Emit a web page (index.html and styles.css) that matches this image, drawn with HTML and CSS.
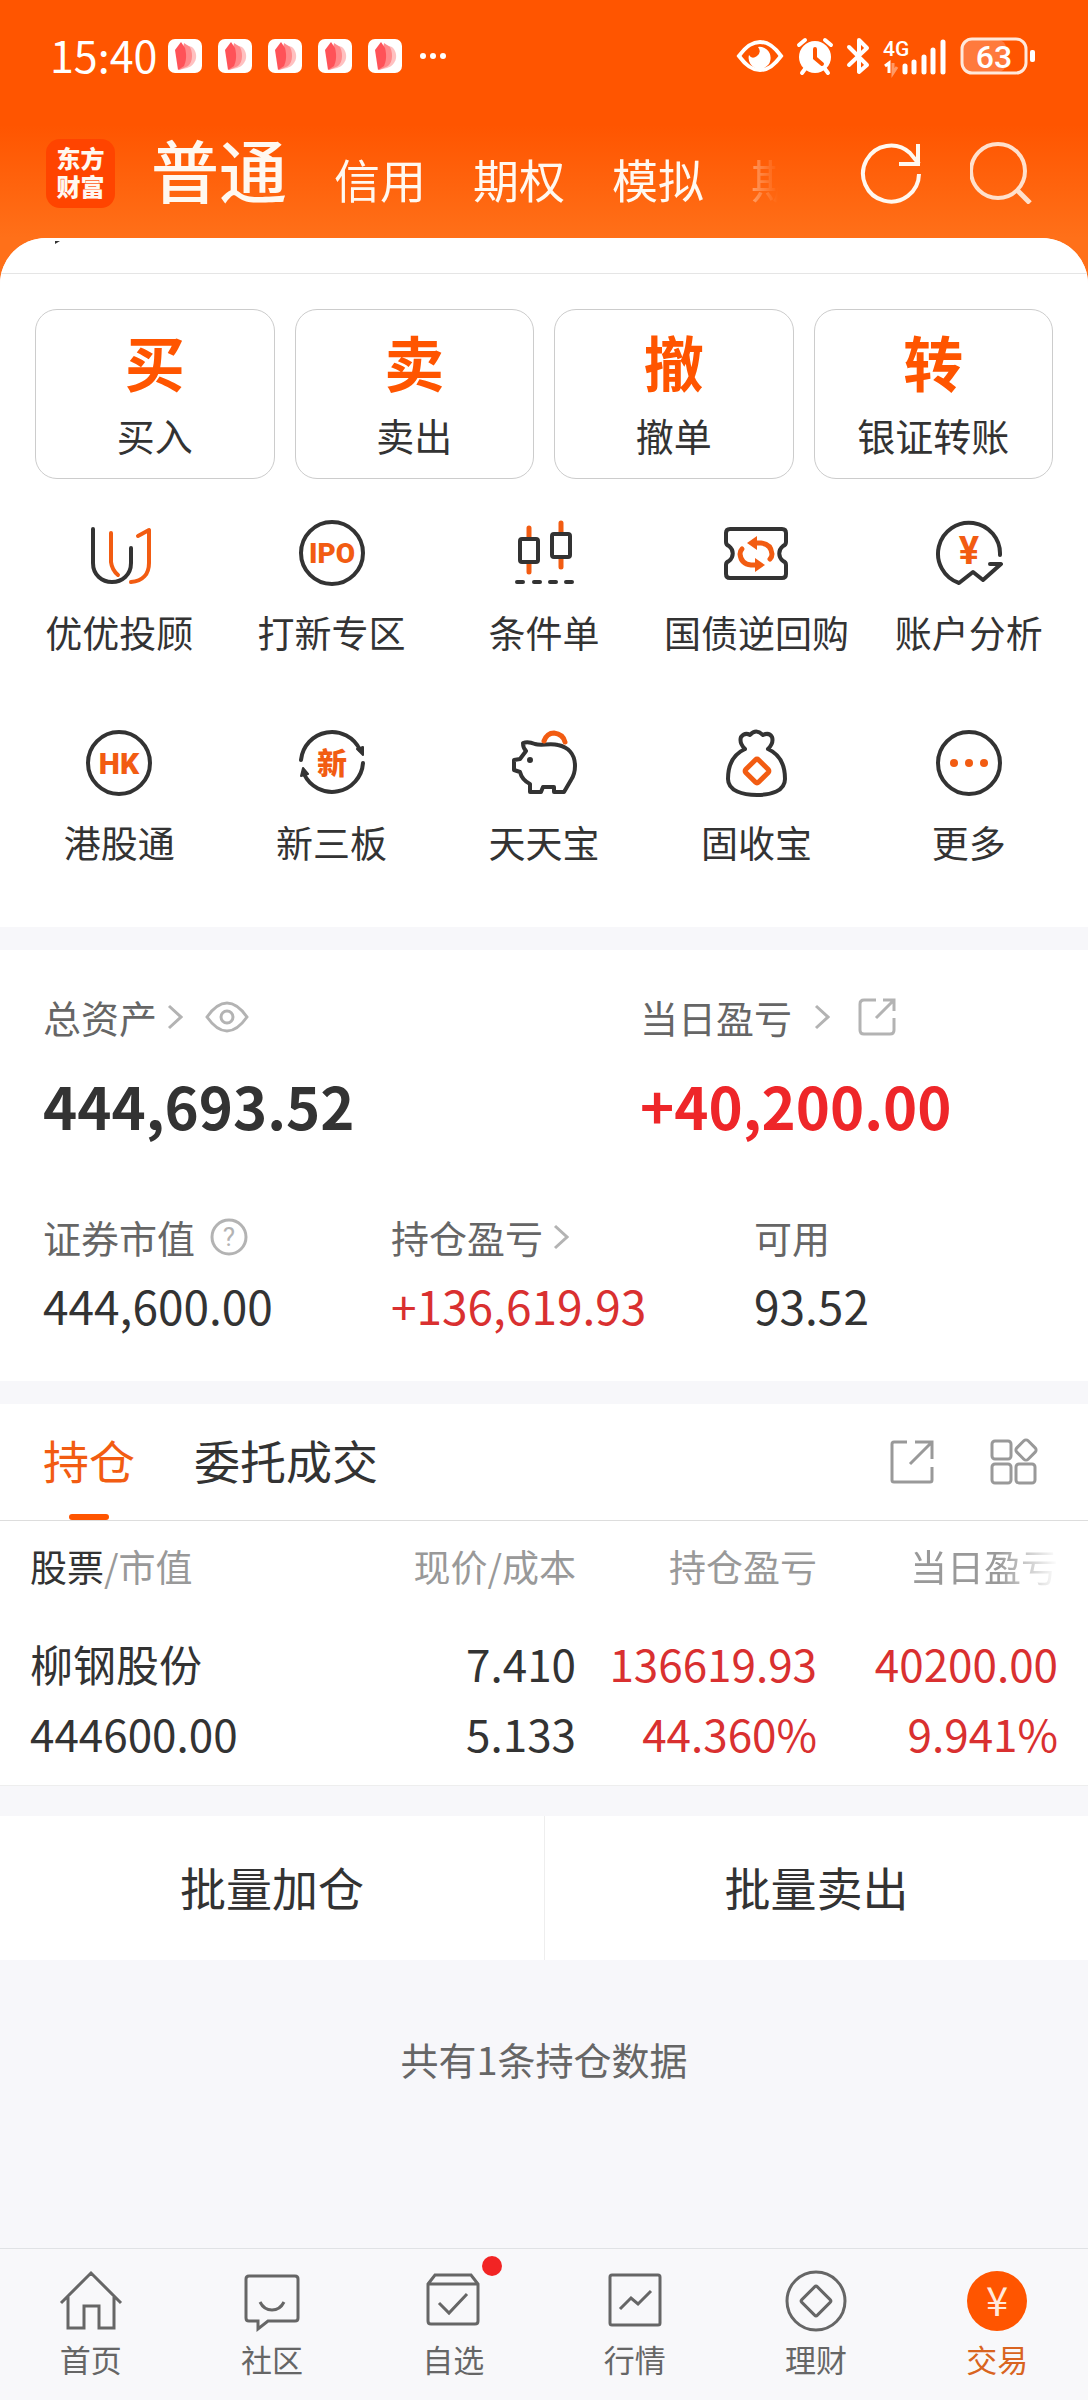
FILE: index.html
```html
<!DOCTYPE html>
<html lang="zh-CN">
<head>
    <meta charset="UTF-8">
    <meta name="viewport" content="width=device-width, initial-scale=1.0">
    <title>交易</title>
    <link rel="stylesheet" href="styles.css">
</head>
<body>
    <div class="status-bar">
        <span class="time">15:40</span>
        <div class="notifications">
            <svg class="notice" viewBox="0 0 34 34"><use href="#notice"/></svg>
            <svg class="notice" viewBox="0 0 34 34"><use href="#notice"/></svg>
            <svg class="notice" viewBox="0 0 34 34"><use href="#notice"/></svg>
            <svg class="notice" viewBox="0 0 34 34"><use href="#notice"/></svg>
            <svg class="notice" viewBox="0 0 34 34">
                <g id="notice">
                    <rect width="34" height="34" rx="7" fill="#fff"/>
                    <path d="M18 6l6 2c7 6 5 18-5 21l-8 2z" fill="#ffc0c0"/>
                    <path d="M16 4l6 4c4 8 2 18-4 20l-7 3z" fill="#ff8a8c"/>
                    <path d="M13 3l4 6c2 8 1 13-1 18l-6 4-3-20z" fill="#ff5258"/>
                </g>
            </svg>
        </div>
        <svg class="dots" width="28" height="8" viewBox="0 0 28 8" fill="#fff"><circle cx="4" cy="4" r="3"/><circle cx="14" cy="4" r="3"/><circle cx="24" cy="4" r="3"/></svg>
        <div class="system">
            <svg width="48" height="36" viewBox="0 0 48 36">
                <path d="M3 18C11 7 17 4 24 4s13 3 21 14C37 29 31 32 24 32S11 29 3 18z" fill="none" stroke="#fff" stroke-width="4"/>
                <path d="M22 9a11 11 0 1 1-9 8q3 5 8 1t1-9z" fill="#fff"/>
            </svg>
            <svg width="36" height="36" viewBox="0 0 36 36">
                <circle cx="18" cy="19" r="16" fill="#fff"/>
                <path d="M2 7l6-5M34 7l-6-5M8 31l-3 4M28 31l3 4" stroke="#fff" stroke-width="4" stroke-linecap="round"/>
                <path d="M18 11v9l7 6" fill="none" stroke="#ff5500" stroke-width="4" stroke-linecap="round"/>
            </svg>
            <svg width="24" height="36" viewBox="0 0 24 36" fill="none" stroke="#fff" stroke-width="4" stroke-linejoin="round" stroke-linecap="round"><path d="M3 9l18 18-8 7V2l8 8L3 27"/></svg>
            <svg width="64" height="36" viewBox="0 0 64 36">
                <text class="network" x="0" y="18">4G</text>
                <path d="M2 28l4-3v10" fill="none" stroke="#fff" stroke-width="3"/>
                <path d="M10 25v10l4-6" fill="none" stroke="#ff9966" stroke-width="3"/>
                <path d="M22 28v6M31 24v10M41 19v15M50 12v22M60 4v30" stroke="#fff" stroke-width="5" stroke-linecap="round"/>
            </svg>
            <svg width="76" height="38" viewBox="0 0 76 38">
                <rect x="3" y="3" width="43" height="32" rx="8" fill="#ff7a3d"/>
                <rect x="2" y="2" width="64" height="34" rx="10" fill="none" stroke="#ffe9dc" stroke-width="3"/>
                <rect x="70" y="13" width="5" height="12" rx="2" fill="#fff"/>
                <text class="battery" x="34" y="31">63</text>
            </svg>
        </div>
    </div>

    <header class="header">
        <div class="logo">东方<br>财富</div>
        <nav class="accounts">
            <button class="account active">普通</button>
            <button class="account">信用</button>
            <button class="account">期权</button>
            <button class="account">模拟</button>
            <button class="account">期货</button>
        </nav>
        <button class="head-btn" aria-label="刷新">
            <svg width="62" height="62" viewBox="0 0 62 62" fill="none" stroke="#fff8f0" stroke-width="4"><path d="M59 32a28 28 0 1 1-9-21l9 11"/><path d="M58 2v20H39"/></svg>
        </button>
        <button class="head-btn" aria-label="搜索">
            <svg width="62" height="62" viewBox="0 0 62 62" fill="none" stroke="#ffe0cc" stroke-width="4"><circle cx="28" cy="29" r="27"/><path d="M47 48l13 13" stroke-width="5"/></svg>
        </button>
    </header>

    <main class="sheet">
        <section class="panel">
            <div class="sheet-top"><svg width="8" height="4" viewBox="0 0 8 4"><path d="M1 0h5L1 3z" fill="#333"/></svg></div>
            <div class="actions">
                <button class="action"><b>买</b><span>买入</span></button>
                <button class="action"><b>卖</b><span>卖出</span></button>
                <button class="action"><b>撤</b><span>撤单</span></button>
                <button class="action"><b>转</b><span>银证转账</span></button>
            </div>
            <div class="menu">
                <a class="menu-item" href="#">
                    <svg class="menu-icon" viewBox="0 0 70 70"><path d="M9 11v34C9 57 18 64 28 64s19-7 19-19V30"/><path class="hot" d="M27 15v29q1 8 7 13M54 18l11-6v33c0 11-6 18-18 19"/></svg>
                    优优投顾
                </a>
                <a class="menu-item" href="#">
                    <svg class="menu-icon" viewBox="0 0 70 70"><circle cx="35" cy="35" r="31"/><text class="small" x="35" y="45">IPO</text></svg>
                    打新专区
                </a>
                <a class="menu-item" href="#">
                    <svg class="menu-icon" viewBox="0 0 70 70"><path class="hot" d="M20 10v9M20 46v8M52 5v9M52 41v8" stroke-width="5"/><rect x="11" y="21" width="18" height="23" rx="2"/><rect x="43" y="16" width="18" height="23" rx="2"/><path d="M8 64h6M25 64h6M41 64h6M57 64h6"/></svg>
                    条件单
                </a>
                <a class="menu-item" href="#">
                    <svg class="menu-icon" viewBox="0 0 70 70">
                        <path d="M5 15q0-4 4-4h52q4 0 4 4v9q0 3-3 4c-5 4-5 11 0 15q3 1 3 4v9q0 4-4 4H9q-4 0-4-4v-9q0-3 3-4c5-4 5-11 0-15q-3-1-3-4z"/>
                        <g id="swap"><path class="hot" d="M34 25h6q10 1 11 11 0 3-2 5" stroke-width="5"/><path class="hot-fill" d="M26 25l10-7v14z"/></g>
                        <use href="#swap" transform="rotate(180 35 36)"/>
                    </svg>
                    国债逆回购
                </a>
                <a class="menu-item" href="#">
                    <svg class="menu-icon" viewBox="0 0 70 70"><path d="M66 37A31 31 0 1 0 25 65l14-11 10 8 18-16H56"/><text class="yuan" x="35" y="46">¥</text></svg>
                    账户分析
                </a>
                <a class="menu-item" href="#">
                    <svg class="menu-icon" viewBox="0 0 70 70"><circle cx="35" cy="35" r="31"/><text x="35" y="46">HK</text></svg>
                    港股通
                </a>
                <a class="menu-item" href="#">
                    <svg class="menu-icon" viewBox="0 0 70 70"><path d="M4 32A31 31 0 0 1 63 22M66 35A31 31 0 0 1 7 46"/><path class="dark-fill" d="M60 21l6-2v8zM4 48l2-8 5 6z"/><text x="35" y="46">新</text></svg>
                    新三板
                </a>
                <a class="menu-item" href="#">
                    <svg class="menu-icon" viewBox="0 0 70 70"><path d="M5 32v10l6 2q2 8 10 12v8h11l2-5h11v5h10l7-12q4-6 4-14c0-12-7-19-17-21-8-2-17 1-23-1q-7-3-12-1 0 5 3 8l-6 8z"/><circle class="dark-fill" cx="21" cy="32" r="2"/><path class="hot" d="M35 13q3-8 10-8 9 1 11 9" stroke-width="5"/></svg>
                    天天宝
                </a>
                <a class="menu-item" href="#">
                    <svg class="menu-icon" viewBox="0 0 70 70"><path d="M24 21q-6-6-4-12 4-5 9-2 6-7 13 0 6-3 9 2 2 6-4 12c11 5 17 15 17 30 0 12-14 16-28 16S7 63 7 51c0-15 6-25 17-30"/><rect class="hot" x="27" y="34" width="18" height="18" rx="2" transform="rotate(45 36 43)" stroke-width="5"/></svg>
                    固收宝
                </a>
                <a class="menu-item" href="#">
                    <svg class="menu-icon" viewBox="0 0 70 70"><circle cx="35" cy="35" r="31"/><circle class="hot-fill" cx="20" cy="35" r="4"/><circle class="hot-fill" cx="35" cy="35" r="4"/><circle class="hot-fill" cx="50" cy="35" r="4"/></svg>
                    更多
                </a>
            </div>
        </section>

        <section class="panel assets">
            <div class="totals">
                <div>
                    <div class="label">总资产
                        <svg class="chevron" viewBox="0 0 16 26"><path d="M2 2l12 11L2 24"/></svg>
                        <svg class="eye" viewBox="0 0 44 32"><path d="M2 16C9 6 15 2 22 2s13 4 20 14C35 26 29 30 22 30S9 26 2 16z"/><circle cx="22" cy="16" r="6"/></svg>
                    </div>
                    <div class="total">444,693.52</div>
                </div>
                <div>
                    <div class="label">当日盈亏
                        <svg class="chevron wide" viewBox="0 0 16 26"><path d="M2 2l12 11L2 24"/></svg>
                        <svg class="share" viewBox="0 0 38 38"><path d="M18 2H6q-4 0-4 4v26q0 4 4 4h26q4 0 4-4V20M25 2h11v11M36 2L18 20"/></svg>
                    </div>
                    <div class="total up">+40,200.00</div>
                </div>
            </div>
            <div class="details">
                <div>
                    <div class="label">证券市值
                        <svg class="help" viewBox="0 0 38 38"><circle cx="19" cy="19" r="17"/><text x="19" y="28">?</text></svg>
                    </div>
                    <div class="detail">444,600.00</div>
                </div>
                <div>
                    <div class="label">持仓盈亏
                        <svg class="chevron" viewBox="0 0 16 26"><path d="M2 2l12 11L2 24"/></svg>
                    </div>
                    <div class="detail up">+136,619.93</div>
                </div>
                <div>
                    <div class="label">可用</div>
                    <div class="detail">93.52</div>
                </div>
            </div>
        </section>

        <section class="panel holdings">
            <div class="tabs">
                <button class="tab active">持仓</button>
                <button class="tab">委托成交</button>
                <button class="tool" aria-label="分享">
                    <svg width="48" height="48" viewBox="0 0 48 48"><path d="M19 4H6q-2 0-2 2v36q0 2 2 2h36q2 0 2-2V29M27 4h17v17M44 4L22 26"/></svg>
                </button>
                <button class="tool" aria-label="布局">
                    <svg width="48" height="48" viewBox="0 0 48 48"><rect x="2" y="3" width="19" height="18" rx="3"/><rect x="2" y="26" width="19" height="19" rx="3"/><rect x="26" y="26" width="19" height="19" rx="3"/><rect x="28" y="4" width="16" height="16" rx="3" transform="rotate(45 36 12)"/></svg>
                </button>
            </div>
            <table class="stocks">
                <thead>
                    <tr>
                        <th><span class="dark">股票</span>/市值</th>
                        <th>现价/成本</th>
                        <th>持仓盈亏</th>
                        <th class="fade">当日盈亏</th>
                    </tr>
                </thead>
                <tbody>
                    <tr>
                        <td><div class="name">柳钢股份</div><div>444600.00</div></td>
                        <td><div>7.410</div><div>5.133</div></td>
                        <td class="up"><div>136619.93</div><div>44.360%</div></td>
                        <td class="up"><div>40200.00</div><div>9.941%</div></td>
                    </tr>
                </tbody>
            </table>
        </section>

        <div class="batch">
            <button>批量加仓</button>
            <button>批量卖出</button>
        </div>
        <p class="summary">共有1条持仓数据</p>
    </main>

    <nav class="bottom-nav">
        <a href="#">
            <span class="nav-icon"><svg viewBox="0 0 64 64"><path d="M2 34L32 4l30 30M9 28v31h16V37h15v22h15V28"/></svg></span>
            首页
        </a>
        <a href="#">
            <span class="nav-icon"><svg viewBox="0 0 64 64"><path d="M9 7h46q3 0 3 3v39q0 3-3 3H28l-10 8v-8H9q-3 0-3-3V10q0-3 3-3zM20 33q4 8 12 8t12-8"/></svg></span>
            社区
        </a>
        <a href="#">
            <span class="nav-icon"><svg viewBox="0 0 64 64"><path d="M7 15l7-9h36l7 9v37q0 3-3 3H10q-3 0-3-3zM7 15h50M18 34l10 10 18-19"/></svg><i class="badge"></i></span>
            自选
        </a>
        <a href="#">
            <span class="nav-icon"><svg viewBox="0 0 64 64"><rect x="7" y="6" width="50" height="50" rx="2"/><path d="M17 40l11-11 7 6 13-13"/></svg></span>
            行情
        </a>
        <a href="#">
            <span class="nav-icon"><svg viewBox="0 0 64 64"><circle cx="32" cy="32" r="29"/><rect x="21" y="21" width="22" height="22" rx="2" transform="rotate(45 32 32)"/></svg></span>
            理财
        </a>
        <a class="active" href="#">
            <span class="nav-icon"><svg viewBox="0 0 64 64"><circle class="coin" cx="32" cy="32" r="30"/><text x="32" y="47">¥</text></svg></span>
            交易
        </a>
    </nav>
</body>
</html>
```
FILE: styles.css
```css
* {
    box-sizing: border-box;
}
body {
    margin: 0;
    min-height: 100vh;
    display: flex;
    flex-direction: column;
    font-family: "Noto Sans CJK SC", "Noto Sans", sans-serif;
    color: #333;
    background: linear-gradient(#ff5500 125px, #ff7019 238px);
}
button {
    padding: 0;
    border: none;
    background: none;
    font-family: inherit;
    color: inherit;
    cursor: pointer;
}
a {
    color: inherit;
    text-decoration: none;
}
svg {
    flex-shrink: 0;
}

/* status bar */
.status-bar {
    display: flex;
    align-items: center;
    height: 112px;
    padding: 0 52px 0 50px;
    color: #fff;
}
.time {
    width: 118px;
    padding-bottom: 4px;
    font-size: 43px;
    line-height: 50px;
}
.notifications {
    display: flex;
    gap: 16px;
}
.notice {
    width: 34px;
    height: 34px;
}
.dots {
    margin-left: 17px;
}
.system {
    display: flex;
    align-items: center;
    gap: 13px;
    margin-left: auto;
}
.system svg {
    overflow: visible;
}
.network {
    fill: #fff;
    font: 500 21px Roboto, sans-serif;
}
.battery {
    fill: #fff;
    font: 500 32px Roboto, sans-serif;
    text-anchor: middle;
}

/* header */
.header {
    display: flex;
    align-items: center;
    height: 126px;
    padding: 0 56px 4px 46px;
    color: #fff8f0;
}
.logo {
    width: 69px;
    height: 69px;
    padding-top: 5px;
    border-radius: 14px;
    background: #ff4400;
    font-size: 24px;
    font-weight: 900;
    line-height: 28px;
    text-align: center;
}
.accounts {
    flex: 1;
    display: flex;
    align-items: baseline;
    gap: 47px;
    margin: 0 82px 0 36px;
    overflow: hidden;
    -webkit-mask-image: linear-gradient(to right, #000 calc(100% - 70px), transparent);
    mask-image: linear-gradient(to right, #000 calc(100% - 70px), transparent);
}
.account {
    flex-shrink: 0;
    font-size: 46px;
    line-height: 100px;
}
.account.active {
    font-size: 68px;
    font-weight: 500;
}
.head-btn {
    height: 62px;
}
.head-btn + .head-btn {
    margin-left: 48px;
}
.head-btn svg {
    display: block;
}

/* content */
.sheet {
    flex: 1;
    overflow: hidden;
    border-radius: 46px 46px 0 0;
    background: #f7f7fa;
}
.panel {
    margin-bottom: 23px;
    background: #fff;
}
.sheet-top {
    height: 36px;
    padding-left: 54px;
    border-bottom: 1px solid #e5e5e5;
    line-height: 0;
}
.actions {
    display: grid;
    grid-template-columns: repeat(4, 1fr);
    gap: 20px;
    padding: 35px 35px 0;
}
.action {
    display: flex;
    flex-direction: column;
    align-items: center;
    height: 170px;
    padding-top: 11px;
    border: 1px solid #ccc;
    border-radius: 22px;
    font-size: 38px;
    line-height: 56px;
}
.action b {
    margin-bottom: 6px;
    color: #ff5500;
    font-size: 60px;
    line-height: 80px;
}
.menu {
    display: grid;
    grid-template-columns: repeat(5, 1fr);
    row-gap: 36px;
    padding: 39px 13px 25px;
}
.menu-item {
    display: flex;
    flex-direction: column;
    align-items: center;
    height: 174px;
    gap: 16px;
    font-size: 37px;
    line-height: 56px;
    white-space: nowrap;
}
.menu-icon {
    width: 70px;
    height: 70px;
    fill: none;
    stroke: #333;
    stroke-width: 4;
    stroke-linecap: round;
    stroke-linejoin: round;
}
.menu-icon .hot {
    stroke: #f25c12;
}
.menu-icon .hot-fill {
    fill: #f25c12;
    stroke: none;
}
.menu-icon .dark-fill {
    fill: #333;
    stroke-width: 2;
}
.menu-icon text {
    fill: #f25c12;
    stroke: none;
    font: 900 30px Roboto, "Noto Sans CJK SC", sans-serif;
    text-anchor: middle;
}
.menu-icon .small {
    font-size: 28px;
}
.menu-icon .yuan {
    font-size: 38px;
    font-weight: 700;
}

/* assets */
.assets {
    height: 431px;
    padding: 39px 43px 0;
}
.totals {
    display: grid;
    grid-template-columns: 597px 1fr;
}
.details {
    display: grid;
    grid-template-columns: 348px 363px 1fr;
    margin-top: 62px;
}
.label {
    display: flex;
    align-items: center;
    height: 56px;
    color: #666;
    font-size: 38px;
    line-height: 56px;
}
.label svg {
    fill: none;
    stroke: #b3b3b3;
    stroke-width: 3;
}
.chevron {
    width: 16px;
    height: 26px;
    margin-left: 10px;
}
.chevron.wide {
    margin-left: 22px;
}
.eye {
    width: 44px;
    height: 32px;
    margin-left: 22px;
}
.share {
    width: 38px;
    height: 38px;
    margin-left: 28px;
}
.help {
    width: 38px;
    height: 38px;
    margin-left: 15px;
}
.help text {
    fill: #b3b3b3;
    stroke: none;
    font: 26px Roboto, sans-serif;
    text-anchor: middle;
}
.total {
    margin-top: 18px;
    font-size: 58px;
    font-weight: 700;
    line-height: 84px;
}
.detail {
    margin-top: 6px;
    font-size: 46px;
    line-height: 68px;
}
.up {
    color: #d93030;
}
.total.up {
    color: #ee2629;
}

/* holdings */
.holdings {
    margin-bottom: 30px;
    border-bottom: 1px solid #eee;
}
.tabs {
    display: flex;
    align-items: center;
    height: 117px;
    padding: 0 50px 0 43px;
    border-bottom: 1px solid #ddd;
}
.tab {
    position: relative;
    height: 116px;
    padding-bottom: 6px;
    margin-right: 59px;
    font-size: 46px;
    line-height: 110px;
}
.tab.active {
    color: #f25c12;
}
.tab.active::after {
    content: "";
    position: absolute;
    left: 50%;
    bottom: 0;
    width: 40px;
    height: 6px;
    margin-left: -20px;
    border-radius: 3px;
    background: #ff5500;
}
.tool {
    height: 48px;
    margin-left: 54px;
}
.tab + .tool {
    margin-left: auto;
}
.tool svg {
    display: block;
    fill: none;
    stroke: #999;
    stroke-width: 3;
}
.stocks {
    width: 100%;
    padding: 0 30px 17px;
    border-spacing: 0;
    table-layout: fixed;
}
.stocks th,
.stocks td {
    width: 241px;
    padding: 0;
    text-align: right;
    white-space: nowrap;
}
.stocks th:first-child,
.stocks td:first-child {
    width: auto;
    text-align: left;
}
.stocks th {
    height: 107px;
    padding-bottom: 18px;
    color: #999;
    font-size: 37px;
    font-weight: 400;
    line-height: 56px;
}
.stocks td {
    font-size: 44px;
    line-height: 70px;
}
.stocks .name {
    font-size: 43px;
}
.stocks .dark {
    color: #333;
}
.stocks .fade {
    -webkit-mask-image: linear-gradient(to right, #000 75%, transparent);
    mask-image: linear-gradient(to right, #000 75%, transparent);
}

.batch {
    display: grid;
    grid-template-columns: 1fr 1fr;
    background: #fff;
}
.batch button {
    height: 144px;
    padding-bottom: 4px;
    font-size: 46px;
}
.batch button + button {
    border-left: 1px solid #eee;
}
.summary {
    margin: 71px 0;
    color: #666;
    font-size: 38px;
    line-height: 56px;
    text-align: center;
}

/* bottom navigation */
.bottom-nav {
    display: grid;
    grid-template-columns: repeat(6, 1fr);
    height: 152px;
    padding-top: 20px;
    border-top: 1px solid #e0e2e5;
    background: #f8f8fa;
    color: #666;
}
.bottom-nav a {
    display: flex;
    flex-direction: column;
    align-items: center;
    gap: 4px;
    font-size: 31px;
    line-height: 44px;
}
.bottom-nav .active {
    color: #d96420;
}
.nav-icon {
    position: relative;
    width: 64px;
    height: 64px;
}
.nav-icon svg {
    display: block;
    fill: none;
    stroke: #666;
    stroke-width: 3;
}
.nav-icon .coin {
    fill: #ff5500;
    stroke: none;
}
.nav-icon text {
    fill: #ffe9dc;
    stroke: none;
    font: 40px "Noto Sans CJK SC", sans-serif;
    text-anchor: middle;
}
.badge {
    position: absolute;
    top: -13px;
    right: -17px;
    width: 20px;
    height: 20px;
    border-radius: 50%;
    background: #f22424;
}
```
